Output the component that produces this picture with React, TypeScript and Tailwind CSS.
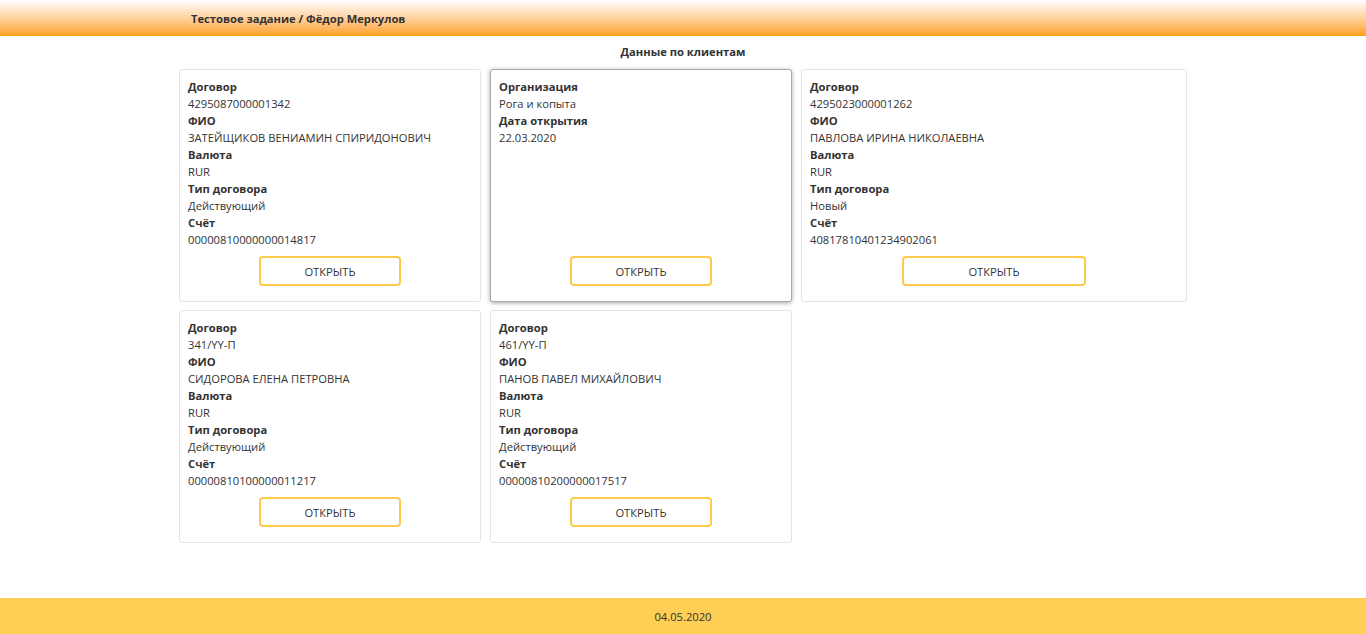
type Field = { label: string; value: string };

type Client = {
  id: number;
  fields: Field[];
  wide?: boolean;
  hovered?: boolean;
};

const clients: Client[] = [
  {
    id: 1,
    fields: [
      { label: 'Договор', value: '4295087000001342' },
      { label: 'ФИО', value: 'ЗАТЕЙЩИКОВ ВЕНИАМИН СПИРИДОНОВИЧ' },
      { label: 'Валюта', value: 'RUR' },
      { label: 'Тип договора', value: 'Действующий' },
      { label: 'Счёт', value: '00000810000000014817' },
    ],
  },
  {
    id: 2,
    hovered: true,
    fields: [
      { label: 'Организация', value: 'Рога и копыта' },
      { label: 'Дата открытия', value: '22.03.2020' },
    ],
  },
  {
    id: 3,
    wide: true,
    fields: [
      { label: 'Договор', value: '4295023000001262' },
      { label: 'ФИО', value: 'ПАВЛОВА ИРИНА НИКОЛАЕВНА' },
      { label: 'Валюта', value: 'RUR' },
      { label: 'Тип договора', value: 'Новый' },
      { label: 'Счёт', value: '40817810401234902061' },
    ],
  },
  {
    id: 4,
    fields: [
      { label: 'Договор', value: '341/YY-П' },
      { label: 'ФИО', value: 'СИДОРОВА ЕЛЕНА ПЕТРОВНА' },
      { label: 'Валюта', value: 'RUR' },
      { label: 'Тип договора', value: 'Действующий' },
      { label: 'Счёт', value: '00000810100000011217' },
    ],
  },
  {
    id: 5,
    fields: [
      { label: 'Договор', value: '461/YY-П' },
      { label: 'ФИО', value: 'ПАНОВ ПАВЕЛ МИХАЙЛОВИЧ' },
      { label: 'Валюта', value: 'RUR' },
      { label: 'Тип договора', value: 'Действующий' },
      { label: 'Счёт', value: '00000810200000017517' },
    ],
  },
];

function ClientCard({ client }: { client: Client }) {
  return (
    <div
      className={`flex flex-col h-[233px] rounded-[3px] border bg-white px-2 pt-[8px] pb-[15px] ${
        client.wide ? 'w-[386px]' : 'w-[302px]'
      } ${client.hovered ? 'border-[#a8a8a8] shadow-[0_1px_4px_rgba(0,0,0,0.35)]' : 'border-[#e4e4e4]'}`}
    >
      <div>
        {client.fields.map((f) => (
          <div key={f.label}>
            <div className="font-bold">{f.label}</div>
            <div>{f.value}</div>
          </div>
        ))}
      </div>
      <button className="mt-auto mx-auto w-1/2 h-[30px] rounded-[4px] border-2 border-[#ffc94a] bg-white text-[#333]">
        ОТКРЫТЬ
      </button>
    </div>
  );
}

export default function App() {
  return (
    <div
      className="min-h-screen flex flex-col bg-white text-[11.2px] leading-[17px] text-[#333]"
      style={{ fontFamily: '"Open Sans", "Noto Sans", sans-serif' }}
    >
      <header className="h-9 flex items-center pl-[191px] bg-gradient-to-b from-white to-[#ffa000]">
        <span className="font-bold text-[#333]">Тестовое задание / Фёдор Меркулов</span>
      </header>

      <main className="flex-1">
        <h1 className="mt-[7px] text-center font-bold">Данные по клиентам</h1>
        <div className="mx-auto mt-[9px] w-[1008px] flex flex-wrap gap-x-[9px] gap-y-2">
          {clients.map((c) => (
            <ClientCard key={c.id} client={c} />
          ))}
        </div>
      </main>

      <footer className="h-9 flex items-center justify-center bg-[#ffce55]">04.05.2020</footer>
    </div>
  );
}
